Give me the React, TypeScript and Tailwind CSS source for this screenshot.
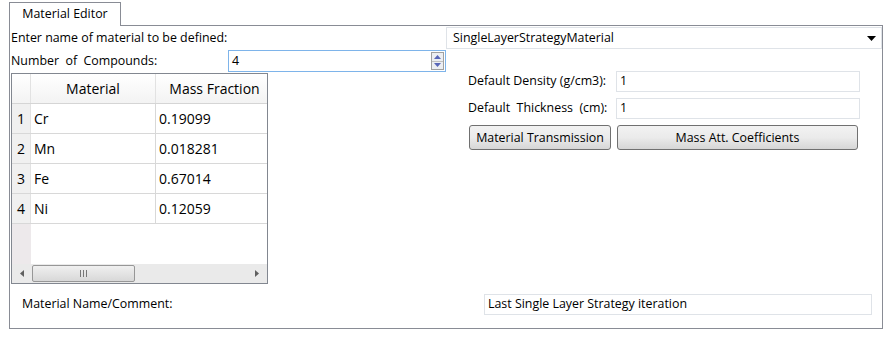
// Material editor panel
const rows = [
  { n: 1, material: 'Cr', fraction: '0.19099' },
  { n: 2, material: 'Mn', fraction: '0.018281' },
  { n: 3, material: 'Fe', fraction: '0.67014' },
  { n: 4, material: 'Ni', fraction: '0.12059' },
]

const font = { fontFamily: '"Open Sans", "Noto Sans", sans-serif' }

function TextBox({ value, className }: { value: string; className: string }) {
  return (
    <div className={`h-[21px] border border-[#dfe3e8] bg-white pl-[3px] flex items-center text-black ${className}`}>
      {value}
    </div>
  )
}

function WinButton({ label, className }: { label: string; className: string }) {
  return (
    <button className={`h-[25px] pt-px rounded-[3px] border border-[#707070] bg-gradient-to-b from-[#f2f2f2] via-[#ebebeb] to-[#d6d6d6] text-black ${className}`}>
      {label}
    </button>
  )
}

export default function App() {
  return (
    <div className="w-[893px] h-[343px] bg-white relative text-black text-[12.4px] leading-none" style={font}>
      {/* Tab strip */}
      <div className="pl-[9px] pt-[2px] flex">
        <div className="w-[112px] h-[24px] border border-b-0 border-[#898c95] bg-white flex items-center justify-center relative z-10">
          Material Editor
        </div>
      </div>

      {/* Pane */}
      <div className="ml-[9px] w-[874px] h-[304px] -mt-px border border-[#898c95] flex flex-col">
        {/* Name row */}
        <div className="flex items-center h-[22px] mt-px">
          <div className="pl-px w-[436px]">Enter name of material to be defined:</div>
          <div className="w-[436px] h-[22px] border border-[#dfe3e8] flex items-center justify-between pl-[6px] pr-[5px]">
            <span>SingleLayerStrategyMaterial</span>
            <svg width="9" height="5" viewBox="0 0 9 5"><path d="M0 0h9L4.5 5z" fill="#000" /></svg>
          </div>
        </div>

        {/* Compounds row */}
        <div className="flex items-center h-[22px] mt-px">
          <div className="pl-px w-[218px]">Number &nbsp;of &nbsp;Compounds:</div>
          <div className="w-[218px] h-[22px] border border-[#7eb4ea] flex items-center justify-between pl-[3px] pr-px">
            <span>4</span>
            <div className="w-[13px] h-[18px] border border-[#a0a0a0] flex flex-col bg-[#eceef2]">
              <div className="flex-1 flex items-center justify-center border-b border-[#c0c0c0]">
                <svg width="7" height="4" viewBox="0 0 7 4"><path d="M0 4h7L3.5 0z" fill="#5866b8" /></svg>
              </div>
              <div className="flex-1 flex items-center justify-center">
                <svg width="7" height="4" viewBox="0 0 7 4"><path d="M0 0h7L3.5 4z" fill="#5866b8" /></svg>
              </div>
            </div>
          </div>
        </div>

        <div className="flex mt-px">
          {/* Table */}
          <div className="ml-px w-[257px] h-[211px] border border-[#828790] flex flex-col text-[14px]">
            <div className="flex h-[30px] border-b border-[#d5d5d5] bg-gradient-to-b from-white to-[#f3f3f3]">
              <div className="w-[19px] border-r border-[#e2e2e2]" />
              <div className="w-[125px] border-r border-[#e2e2e2] flex items-center justify-center">Material</div>
              <div className="flex-1 flex items-center justify-center pl-[6px]">Mass Fraction</div>
            </div>
            {rows.map((r) => (
              <div key={r.n} className="flex h-[30px] border-b border-[#d8d8d8]">
                <div className="w-[19px] bg-[#f0f0f0] border-r border-[#e2e2e2] flex items-center justify-center">{r.n}</div>
                <div className="w-[125px] border-r border-[#d8d8d8] flex items-center pl-[3px]">{r.material}</div>
                <div className="flex-1 flex items-center pl-[3px]">{r.fraction}</div>
              </div>
            ))}
            <div className="flex-1 flex">
              <div className="w-[19px] bg-[#ede9eb]" />
            </div>
            {/* Horizontal scrollbar */}
            <div className="h-[19px] bg-[#eaeaea] flex items-center">
              <div className="w-[20px] flex justify-center">
                <svg width="4" height="7" viewBox="0 0 4 7"><path d="M4 0v7L0 3.5z" fill="#606060" /></svg>
              </div>
              <div className="w-[103px] h-[17px] rounded-[2px] border border-[#979797] bg-gradient-to-b from-[#f0f0f0] to-[#d8d8d8] flex items-center justify-center gap-[2px]">
                <span className="w-px h-[7px] bg-[#777]" />
                <span className="w-px h-[7px] bg-[#777]" />
                <span className="w-px h-[7px] bg-[#777]" />
              </div>
              <div className="flex-1" />
              <div className="w-[20px] flex justify-center">
                <svg width="4" height="7" viewBox="0 0 4 7"><path d="M0 0v7L4 3.5z" fill="#606060" /></svg>
              </div>
            </div>
          </div>

          {/* Right column */}
          <div className="ml-[199px] flex flex-col">
            <div className="flex items-center mt-[-2px] h-[21px]">
              <div className="w-[149px] pl-px">Default Density (g/cm3):</div>
              <TextBox value="1" className="w-[244px]" />
            </div>
            <div className="flex items-center mt-[6px] h-[21px]">
              <div className="w-[149px] pl-px">Default &nbsp;Thickness &nbsp;(cm):</div>
              <TextBox value="1" className="w-[244px]" />
            </div>
            <div className="flex mt-[6px] ml-[2px] gap-[6px]">
              <WinButton label="Material Transmission" className="w-[142px]" />
              <WinButton label="Mass Att. Coefficients" className="w-[241px]" />
            </div>
          </div>
        </div>

        {/* Comment row */}
        <div className="flex items-center mt-[10px] h-[21px]">
          <div className="pl-[12px] w-[474px]">Material Name/Comment:</div>
          <TextBox value="Last Single Layer Strategy iteration" className="w-[388px]" />
        </div>
      </div>
    </div>
  )
}
